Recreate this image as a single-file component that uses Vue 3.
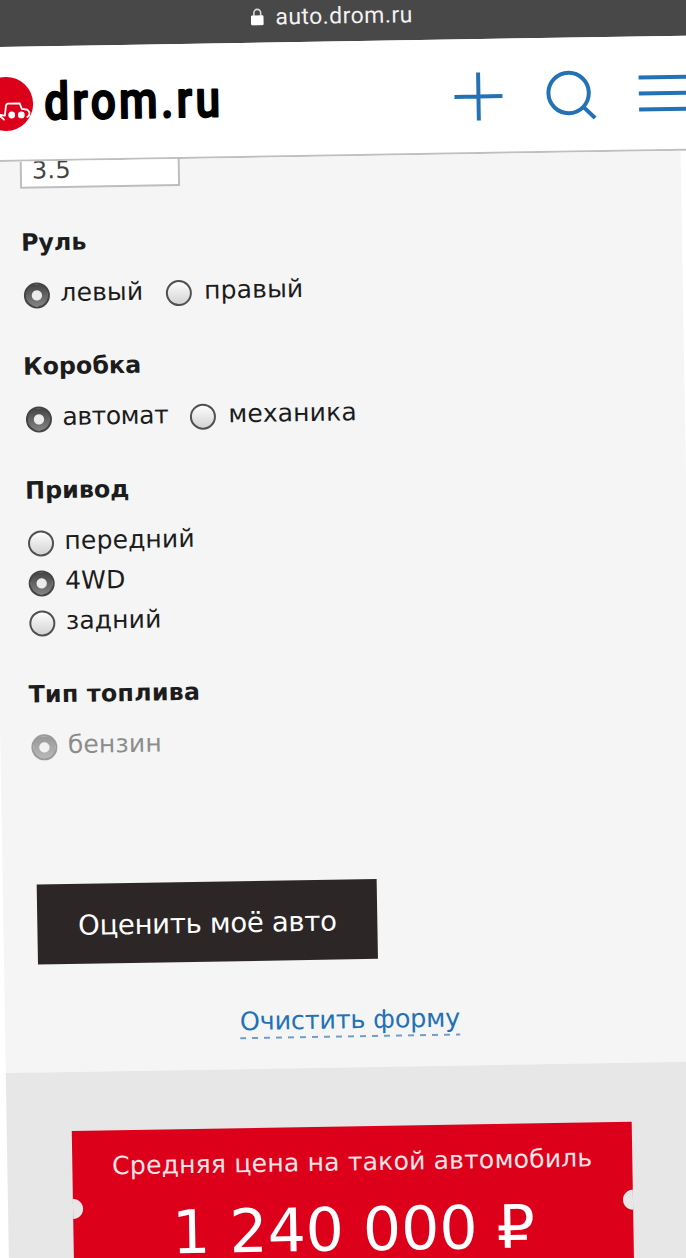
<template>
  <div class="screen">
    <div class="page">
      <!-- Browser address bar -->
      <div class="address-bar">
        <svg class="lock" width="14" height="18" viewBox="0 0 14 18">
          <path d="M3.6 8V5.2a3.4 3.6 0 0 1 6.8 0V8" fill="none" stroke="#d8d8d8" stroke-width="1.6" />
          <rect x="0.6" y="7.6" width="12.6" height="10" rx="1.4" fill="#fff" />
        </svg>
        <span class="host">auto.drom.ru</span>
      </div>

      <!-- Site header -->
      <header class="header">
        <svg class="logo" width="250" height="70" viewBox="0 0 250 70">
          <circle cx="16.4" cy="35" r="27" fill="#dc001b" />
          <g fill="none" stroke="#fff" stroke-width="1.8" stroke-linejoin="round" stroke-linecap="round">
            <path d="M8 45l6 5.6M10 46l5 .6 1.2-10 1.2-1.8H30l2 5.4 5.6 1 2 2.600-.4 3.200-1.800 1.400" />
          </g>
          <circle cx="21.8" cy="46.2" r="3.4" fill="#fff" />
          <circle cx="31.4" cy="46.3" r="3.4" fill="#fff" />
          <text class="logo-text" transform="translate(54.4 51.2) scale(0.86 1)">drom.ru</text>
        </svg>
        <svg class="tool-icons" width="260" height="60" viewBox="0 0 260 60">
          <g fill="none" stroke="#2272b5" stroke-width="4">
            <path d="M26.8 6.4v48M2.8 30.4h48" />
            <circle cx="117" cy="28.4" r="20.2" />
            <path d="M131.5 42.5l11.6 11.3" />
            <path d="M187.2 14.2h72M187.2 30.2h72M187.2 46.2h72" />
          </g>
        </svg>
      </header>

      <!-- Car parameters -->
      <form class="form" @submit.prevent>
        <div class="volume">{{ volume }}</div>

        <div class="group" v-for="group in groups" :key="group.title">
          <h3>{{ group.title }}</h3>
          <div class="options" :class="{ column: group.column }">
            <label
              v-for="option in group.options"
              :key="option"
              class="option"
              :class="{ disabled: group.disabled, tight: option === 'автомат' }"
              @click="select(group, option)"
            >
              <span class="radio" :class="{ checked: group.value === option }"></span>
              <span class="option-text">{{ option }}</span>
            </label>
          </div>
        </div>

        <button class="submit" type="submit">Оценить моё авто</button>
        <a class="reset" @click="reset">Очистить форму</a>
      </form>

      <!-- Price -->
      <section class="result">
        <div class="ticket">
          <p class="ticket-label">Средняя цена на такой автомобиль</p>
          <p class="ticket-price">1 240 000 ₽</p>
        </div>
      </section>
    </div>
  </div>
</template>

<script setup>
import { ref, reactive } from 'vue'

const volume = ref('3.5')

const groups = reactive([
  { title: 'Руль', value: 'левый', options: ['левый', 'правый'] },
  { title: 'Коробка', value: 'автомат', options: ['автомат', 'механика'] },
  { title: 'Привод', value: '4WD', options: ['передний', '4WD', 'задний'], column: true },
  { title: 'Тип топлива', value: 'бензин', options: ['бензин'], disabled: true }
])

function select(group, option) {
  if (!group.disabled) group.value = option
}

function reset() {
  volume.value = ''
  groups.forEach((group) => {
    if (!group.disabled) group.value = null
  })
}
</script>

<style>
body {
  margin: 0;
  background: #fff;
}
</style>

<style scoped>
.screen {
  width: 686px;
  height: 1258px;
  overflow: hidden;
  background: #fff;
  font-family: 'DejaVu Sans', Verdana, sans-serif;
  color: #1c1c1c;
}

/* The whole page is slightly tilted */
.page {
  width: 690px;
  margin-left: -12px;
  transform: rotate(-0.95deg);
  transform-origin: 12px 0;
}

/* ─── Address bar ─── */
.address-bar {
  display: flex;
  align-items: flex-start;
  box-sizing: border-box;
  width: 730px;
  height: 47px;
  padding: 12px 0 0 262px;
  background: #484848;
  box-shadow: 0 -20px 0 #484848;
}

.host {
  margin: -3px 0 0 11px;
  font-family: Roboto, sans-serif;
  font-size: 23px;
  line-height: 26px;
  letter-spacing: 0.45px;
  color: #f2f2f2;
}

/* ─── Header ─── */
.header {
  display: flex;
  justify-content: space-between;
  box-sizing: border-box;
  width: 730px;
  height: 115px;
  padding: 22px 8px 0 0;
  background: #fff;
  border-bottom: 2px solid #bfbfbf;
}

.logo-text {
  font-family: Roboto, sans-serif;
  font-size: 51.5px;
  font-weight: 500;
  letter-spacing: 3.8px;
  fill: #000;
  stroke: #000;
  stroke-width: 1.8px;
  stroke-linejoin: round;
}

.tool-icons {
  margin-top: 5px;
}

/* ─── Form ─── */
.form {
  display: flex;
  flex-direction: column;
  box-sizing: border-box;
  height: 911px;
  padding: 0 29px;
  overflow: hidden;
  background: #f5f5f5;
}

.volume {
  flex: none;
  box-sizing: border-box;
  width: 160px;
  height: 38px;
  margin: -11px 0 33px;
  padding-left: 10px;
  border: 2px solid #bdbdbd;
  background: #fff;
  font-size: 24px;
  line-height: 37px;
  letter-spacing: 0.3px;
  color: #444;
}

.group {
  margin-bottom: 33px;
}

h3 {
  height: 40px;
  margin: 0 0 11px;
  font-size: 23.8px;
  font-weight: 700;
  line-height: 42px;
}

.group:nth-child(5) h3 {
  letter-spacing: 0.2px;
}

.options {
  display: flex;
  gap: 20.5px;
}

.options.column {
  flex-direction: column;
  gap: 0;
}

.option {
  display: flex;
  align-items: center;
  gap: 10.5px;
  height: 40px;
}

.options:not(.column) .option + .option {
  gap: 12.5px;
}

.option-text {
  margin-top: 2px;
  font-size: 25px;
  line-height: 40px;
  letter-spacing: 0.15px;
}

.tight .option-text {
  margin-right: -1px;
  letter-spacing: -0.4px;
}

.radio {
  box-sizing: border-box;
  width: 26px;
  height: 26px;
  margin: 5px 0 0 2px;
  border: 2px solid #505050;
  border-radius: 50%;
  background: linear-gradient(#fdfdfd, #d3d3d3);
}

.radio.checked {
  border-color: #444;
  background:
    radial-gradient(circle, #ececec 4.6px, transparent 5.6px),
    linear-gradient(#454545, #838383);
}

.disabled {
  color: #8c8c8c;
}

.disabled .radio.checked {
  border-color: #9b9b9b;
  background:
    radial-gradient(circle, #f2f2f2 4.6px, transparent 5.6px),
    linear-gradient(#989898, #b8b8b8);
}

.submit {
  flex: none;
  width: 340px;
  height: 80px;
  margin: 87px 0 42px 5px;
  padding: 2px 0 0;
  border: 0;
  background: #2d2626;
  font-family: inherit;
  font-size: 27.5px;
  letter-spacing: -0.3px;
  color: #fff;
}

.reset {
  align-self: center;
  height: 36px;
  background: repeating-linear-gradient(90deg, #6f9fc9 0 6px, transparent 6px 12px) 0 100% / 100% 2px no-repeat;
  font-size: 25.5px;
  line-height: 37px;
  letter-spacing: -0.2px;
  color: #2272b5;
}

/* ─── Result ─── */
.result {
  height: 200px;
  padding-top: 59px;
  background: #e7e7e7;
}

.ticket {
  box-sizing: border-box;
  width: 560px;
  height: 180px;
  margin: 0 auto;
  padding-top: 15px;
  background:
    radial-gradient(circle at 0 78px, #e7e7e7 9.5px, transparent 10.5px),
    radial-gradient(circle at 100% 78px, #e7e7e7 9.5px, transparent 10.5px),
    #dc001b;
  text-align: center;
  white-space: nowrap;
}

.ticket-label {
  margin: 0 0 12px;
  font-size: 25px;
  line-height: 41px;
  letter-spacing: 0.23px;
  color: #ffe4e7;
}

.ticket-price {
  margin: 0;
  font-size: 60px;
  line-height: 70px;
  color: #fff;
}
</style>
